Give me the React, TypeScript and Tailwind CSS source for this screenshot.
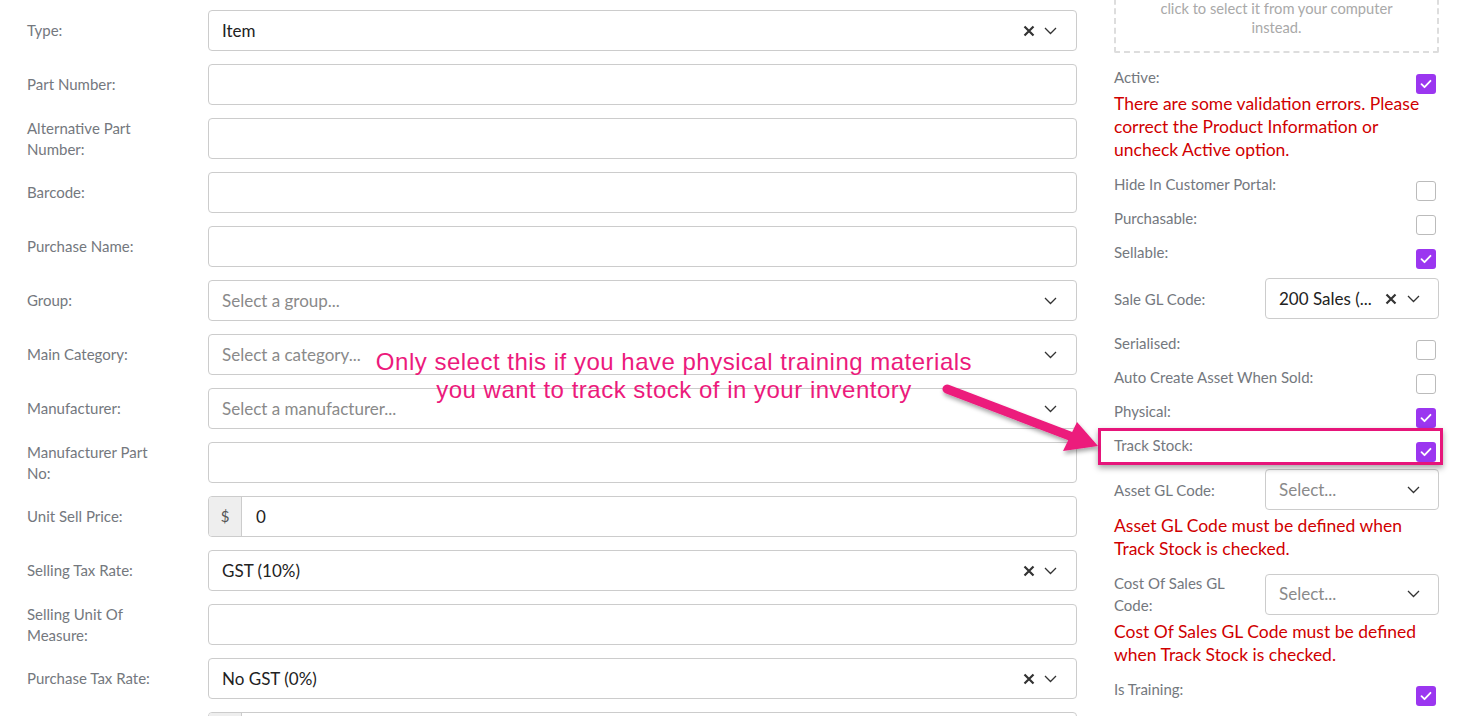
import React from "react";

const Chevron = () => (
  <svg width="13" height="8" viewBox="0 0 13 8" fill="none" className="shrink-0">
    <path d="M1 1l5.5 5.5L12 1" stroke="#333" strokeWidth="1.3" />
  </svg>
);

const Clear = () => (
  <svg width="12" height="12" viewBox="0 0 12 12" fill="none" className="shrink-0">
    <path d="M1.5 1.5l9 9M10.5 1.5l-9 9" stroke="#333" strokeWidth="2.2" />
  </svg>
);

const Checkbox = ({ checked }: { checked?: boolean }) =>
  checked ? (
    <div className="w-5 h-5 rounded-[3px] bg-[#9b36f0] flex items-center justify-center shrink-0">
      <svg width="12" height="10" viewBox="0 0 12 10" fill="none">
        <path d="M1.5 5.2l3 3L10.5 1.8" stroke="#fff" strokeWidth="1.8" strokeLinecap="round" strokeLinejoin="round" />
      </svg>
    </div>
  ) : (
    <div className="w-5 h-5 rounded-[3px] border border-[#bbb] bg-white shrink-0" />
  );

type FieldProps = { label: string; children: React.ReactNode };

const Row = ({ label, children }: FieldProps) => (
  <div className="h-[41px] flex items-center">
    <div className="w-[181px] shrink-0 pr-[45px] text-[15px] leading-[21px] text-[#74787e]">{label}</div>
    <div className="flex-1 min-w-0">{children}</div>
  </div>
);

const TextBox = ({ value }: { value?: string }) => (
  <div className="h-[41px] rounded-[4px] border border-[#ccc] bg-white flex items-center px-[13px] text-[17px] text-[#222]">
    {value}
  </div>
);

const SelectBox = ({ value, placeholder, clear }: { value?: string; placeholder?: string; clear?: boolean }) => (
  <div className="h-[41px] rounded-[4px] border border-[#ccc] bg-white flex items-center pl-[13px] pr-[19px]">
    <span className={`flex-1 min-w-0 truncate text-[17px] ${value ? "text-[#222]" : "text-[#8a8a8a]"}`}>
      {value ?? placeholder}
    </span>
    <div className="flex items-center gap-[9px]">
      {clear && <Clear />}
      <Chevron />
    </div>
  </div>
);

const MoneyBox = ({ value }: { value?: string }) => (
  <div className="h-[41px] rounded-[4px] border border-[#ccc] bg-white flex overflow-hidden">
    <div className="w-[33px] bg-[#eeeeee] border-r border-[#ccc] flex items-center justify-center text-[15px] text-[#555]">
      {value !== undefined && "$"}
    </div>
    <div className="flex-1 flex items-center px-[14px] text-[17px] text-[#222]">{value}</div>
  </div>
);

const CheckRow = ({ label, checked, children }: { label: string; checked?: boolean; children?: React.ReactNode }) => (
  <div className="relative h-[34px] flex justify-between items-center">
    <span className="self-start text-[15px] leading-[20px] text-[#74787e]">{label}</span>
    <div className="mr-[3px]">
      <Checkbox checked={checked} />
    </div>
    {children}
  </div>
);

const SideSelect = ({ label, value, placeholder, clear }: { label: string; value?: string; placeholder?: string; clear?: boolean }) => (
  <div className="flex items-center">
    <div className="w-[151px] shrink-0 pr-3 text-[15px] leading-[22px] text-[#74787e]">{label}</div>
    <div className="flex-1 min-w-0 h-[41px] rounded-[4px] border border-[#ccc] bg-white flex items-center pl-[13px] pr-[18px]">
      <span className={`flex-1 min-w-0 whitespace-nowrap text-[17px] ${value ? "text-[#222]" : "text-[#8a8a8a]"}`}>{value ?? placeholder}</span>
      <div className="flex items-center gap-[10px] pl-2">
        {clear && <Clear />}
        <Chevron />
      </div>
    </div>
  </div>
);

const ErrorText = ({ children }: { children: React.ReactNode }) => (
  <p className="text-[17.5px] leading-[23px] text-[#d00000]">{children}</p>
);

export default function App() {
  return (
    <div className="relative h-[716px] w-[1474px] overflow-hidden bg-white font-['Lato','Open_Sans',sans-serif]">
      <div className="flex pl-[27px] pr-[35px] gap-[37px]">
        {/* left form */}
        <div className="flex-1 flex flex-col gap-[13px] pt-[10px]">
          <Row label="Type:"><SelectBox value="Item" clear /></Row>
          <Row label="Part Number:"><TextBox /></Row>
          <Row label="Alternative Part Number:"><TextBox /></Row>
          <Row label="Barcode:"><TextBox /></Row>
          <Row label="Purchase Name:"><TextBox /></Row>
          <Row label="Group:"><SelectBox placeholder="Select a group..." /></Row>
          <Row label="Main Category:"><SelectBox placeholder="Select a category..." /></Row>
          <Row label="Manufacturer:"><SelectBox placeholder="Select a manufacturer..." /></Row>
          <Row label="Manufacturer Part No:"><TextBox /></Row>
          <Row label="Unit Sell Price:"><MoneyBox value="0" /></Row>
          <Row label="Selling Tax Rate:"><SelectBox value="GST (10%)" clear /></Row>
          <Row label="Selling Unit Of Measure:"><TextBox /></Row>
          <Row label="Purchase Tax Rate:"><SelectBox value="No GST (0%)" clear /></Row>
          {/* next row only peeks in at the bottom edge */}
          <div className="flex">
            <div className="w-[181px] shrink-0" />
            <div className="flex-1"><MoneyBox /></div>
          </div>
        </div>

        {/* right side */}
        <div className="w-[325px] shrink-0 flex flex-col">
          <div className="-mt-[40px] h-[93px] border-2 border-dashed border-[#ddd] rounded-[2px] flex flex-col items-center justify-end pb-[14px] text-[14.7px] leading-[19px] text-[#a9a9a9] text-center">
            <span>click to select it from your computer</span>
            <span>instead.</span>
          </div>

          <div className="relative mt-[12px] h-[20px]">
            <span className="text-[15px] leading-[20px] text-[#74787e]">Active:</span>
            <div className="absolute right-[3px] top-[9px]">
              <Checkbox checked />
            </div>
          </div>
          <div className="mt-[7px]">
            <ErrorText>There are some validation errors. Please correct the Product Information or uncheck Active option.</ErrorText>
          </div>

          <div className="mt-[13px]">
            <CheckRow label="Hide In Customer Portal:" />
            <CheckRow label="Purchasable:" />
            <CheckRow label="Sellable:" checked />
          </div>
          <div className="mt-[2px]">
            <SideSelect label="Sale GL Code:" value="200 Sales (..." clear />
          </div>
          <div className="mt-[14px]">
            <CheckRow label="Serialised:" />
            <CheckRow label="Auto Create Asset When Sold:" />
            <CheckRow label="Physical:" checked />
            <CheckRow label="Track Stock:" checked>
              <div className="absolute -top-[7px] -left-[16px] -right-[4px] h-[37px] border-[3px] border-[#e6157a] shadow-[0_3px_6px_rgba(0,0,0,0.35)] pointer-events-none" />
            </CheckRow>
          </div>
          <SideSelect label="Asset GL Code:" placeholder="Select..." />
          <div className="mt-[4px]">
            <ErrorText>Asset GL Code must be defined when Track Stock is checked.</ErrorText>
          </div>
          <div className="mt-[12px]">
            <SideSelect label="Cost Of Sales GL Code:" placeholder="Select..." />
          </div>
          <div className="mt-[4px]">
            <ErrorText>Cost Of Sales GL Code must be defined when Track Stock is checked.</ErrorText>
          </div>
          <div className="mt-[13px]">
            <CheckRow label="Is Training:" checked />
          </div>
        </div>
      </div>

      {/* annotation */}
      <div className="absolute left-[324px] top-[348px] w-[700px] text-center font-['Liberation_Sans',Arial,sans-serif] text-[24px] leading-[28px] tracking-[0.5px] text-[#ec1a7c]">
        <p>Only select this if you have physical training materials</p>
        <p>you want to track stock of in your inventory</p>
      </div>
      <svg className="absolute left-0 top-0 pointer-events-none" width="1474" height="716" viewBox="0 0 1474 716">
        <defs>
          <filter id="sh" x="-20%" y="-20%" width="140%" height="160%">
            <feDropShadow dx="1" dy="3" stdDeviation="2" floodColor="#000" floodOpacity="0.35" />
          </filter>
        </defs>
        <g filter="url(#sh)">
          <line x1="947" y1="389" x2="1070" y2="436" stroke="#ec1a7c" strokeWidth="9" strokeLinecap="round" />
          <polygon points="1098,446 1063,451 1077,422" fill="#ec1a7c" />
        </g>
      </svg>
    </div>
  );
}
